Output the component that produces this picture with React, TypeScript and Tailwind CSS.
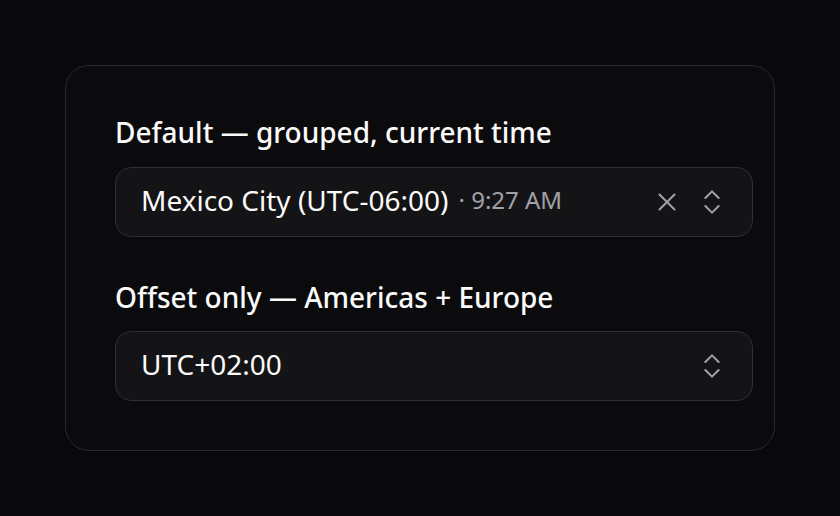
import { ChevronsUpDown, X } from "lucide-react";

export default function App() {
  return (
    <div
      className="w-[840px] h-[516px] bg-[#09090b] flex items-start justify-center pt-[65px] text-[#fafafa]"
      style={{ fontFamily: '"Noto Sans", "Open Sans", sans-serif' }}
    >
      <div className="w-[710px] rounded-[24px] border border-[#2a2a2e] bg-[#0b0b0d] pt-[49px] pb-[49px] pl-[49px] pr-[21px] flex flex-col">
        <label className="text-[28px] leading-[34px] font-medium">Default — grouped, current time</label>
        <div className="mt-[18px] h-[70px] rounded-[16px] border border-[#2e2e33] bg-[#141416] flex items-center pl-[25px] pr-[24px]">
          <span className="text-[28px] pb-[4px]">Mexico City (UTC-06:00)</span>
          <span className="ml-[10px] text-[24px] pb-[4px] text-[#a1a1aa]">· 9:27 AM</span>
          <button className="ml-auto text-[#a1a1aa] flex items-center">
            <X size={30} strokeWidth={1.6} />
          </button>
          <ChevronsUpDown size={32} strokeWidth={1.5} className="ml-[14px] text-[#a1a1aa]" />
        </div>
        <label className="mt-[43px] text-[28px] leading-[34px] font-medium">Offset only — Americas + Europe</label>
        <div className="mt-[17px] h-[70px] rounded-[16px] border border-[#2e2e33] bg-[#141416] flex items-center pl-[25px] pr-[24px]">
          <span className="text-[28px] pb-[4px]">UTC+02:00</span>
          <ChevronsUpDown size={32} strokeWidth={1.5} className="ml-auto text-[#a1a1aa]" />
        </div>
      </div>
    </div>
  );
}
